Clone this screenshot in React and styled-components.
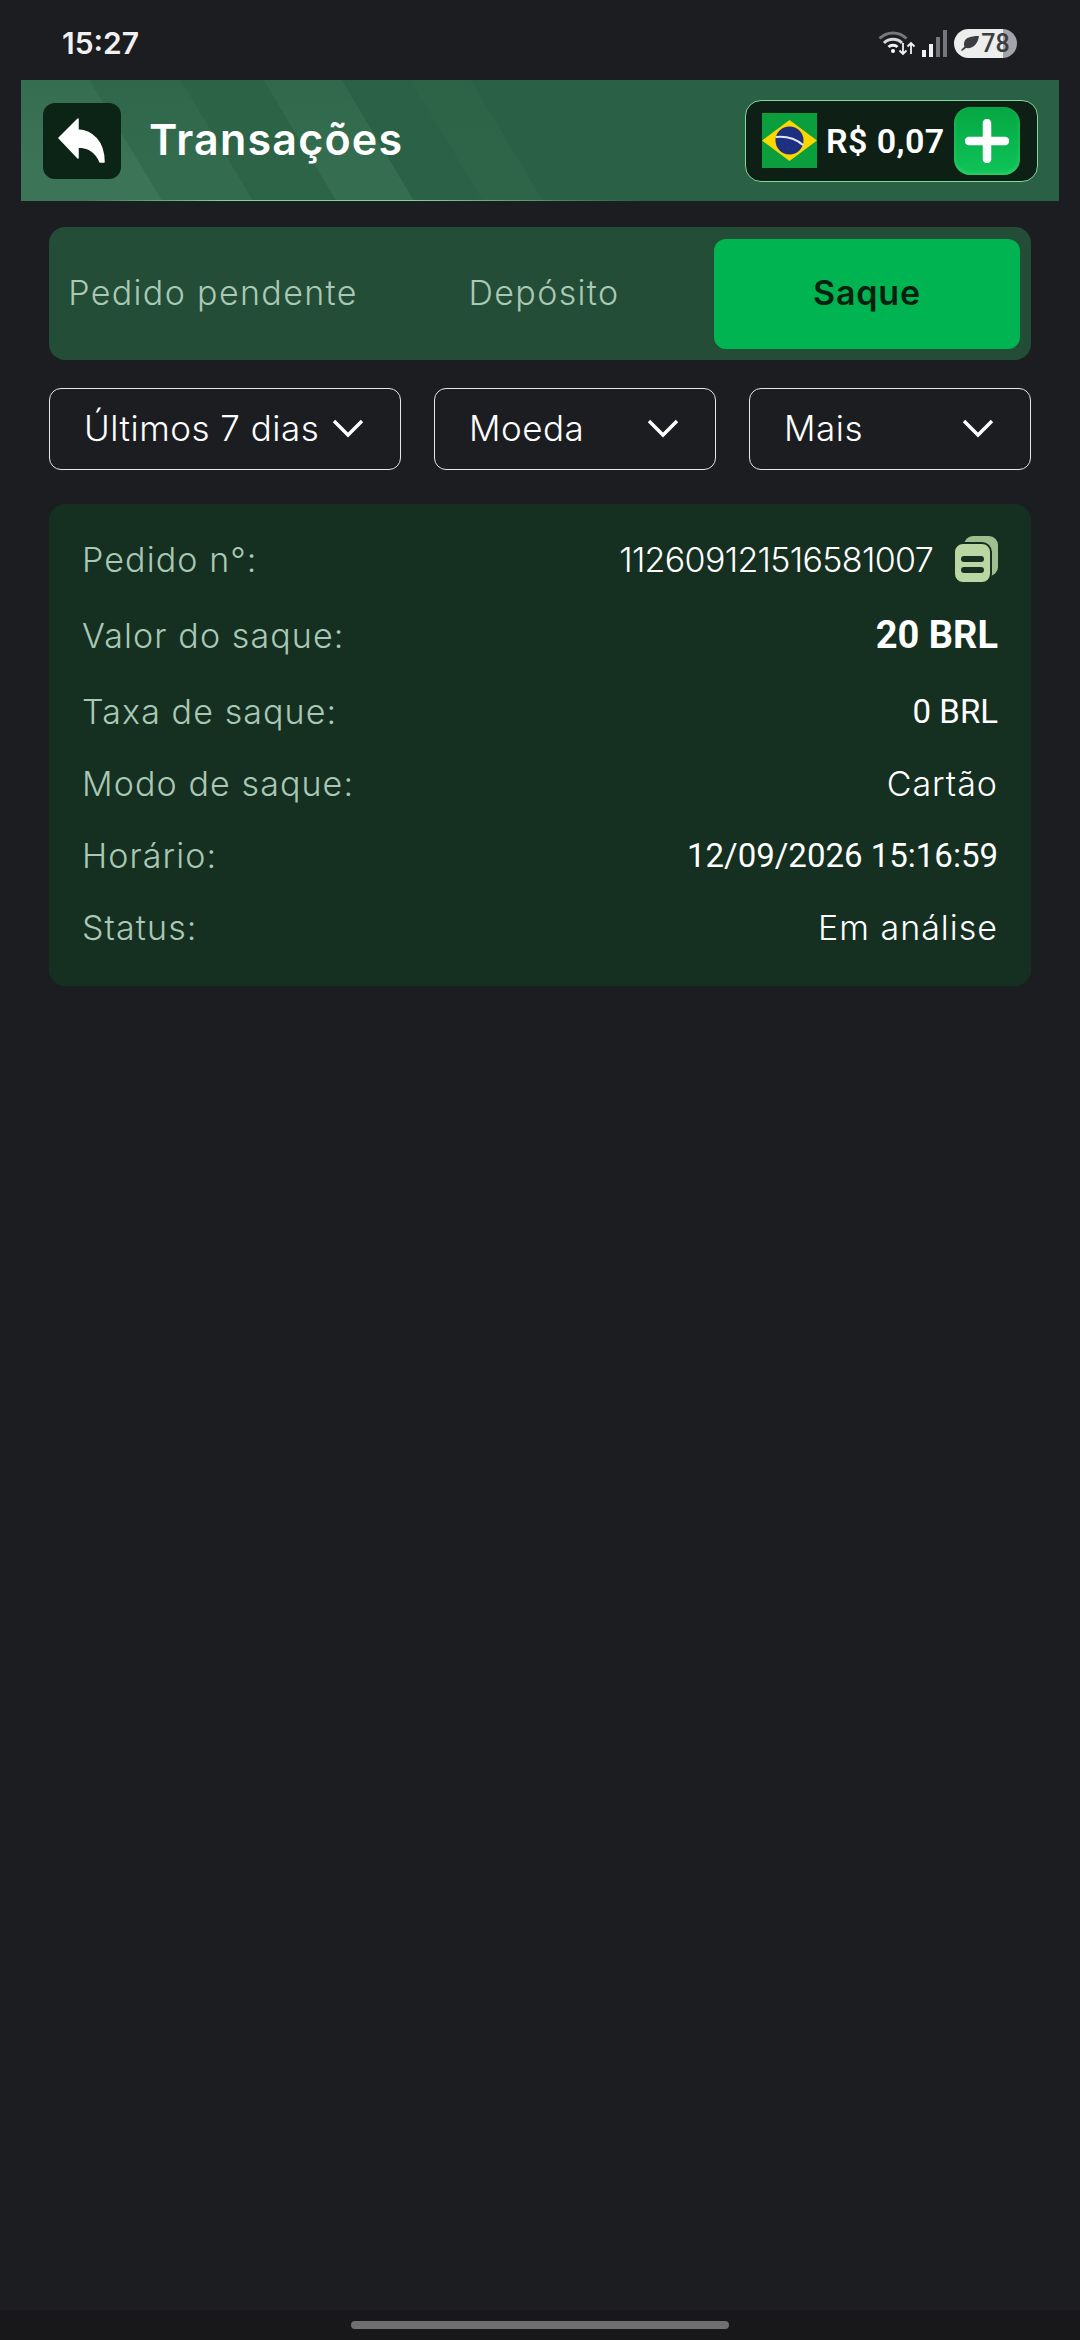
import React from "react";
import styled, { createGlobalStyle } from "styled-components";

const GlobalStyle = createGlobalStyle`
  html, body { margin: 0; padding: 0; background: #1c1d21; }
  * { box-sizing: border-box; }
`;

const sans = `Inter, "Open Sans", sans-serif`;
const num = `Roboto, "Liberation Sans", sans-serif`;

const Page = styled.div`
  width: 1080px;
  height: 2340px;
  background: #1c1d21;
  display: flex;
  flex-direction: column;
  overflow: hidden;
`;

const StatusBar = styled.div`
  height: 80px;
  padding: 6px 63px 0 62px;
  display: flex;
  align-items: center;
  justify-content: space-between;
`;

const Clock = styled.span`
  font: 600 30px ${sans};
  color: #f1f1f3;
`;

const StatusIcons = styled.div`
  display: flex;
  align-items: center;
  gap: 6px;
`;

const Battery = styled.div`
  width: 63px;
  height: 29px;
  border-radius: 15px;
  background: linear-gradient(90deg, #eceded 0 78%, #a4a4a8 78%);
  display: flex;
  align-items: center;
  justify-content: center;
  gap: 1px;
  font: 500 25px ${num};
  color: #3b3c40;
`;

const Header = styled.header`
  height: 121px;
  margin: 0 21px;
  padding: 0 22px;
  display: flex;
  align-items: center;
  justify-content: space-between;
  position: relative;
  background:
    linear-gradient(180deg, rgba(42, 96, 69, 0.35), rgba(42, 96, 69, 0) 70%),
    linear-gradient(59deg, #3b7456 0 12.7%, #336b4e 12.7% 20.9%, #2d6448 20.9% 28.4%, #356d50 28.4% 35.4%, #2b6146 35.4% 41.6%, #2e6448 41.6% 47%, #2a6045 47%);
  &::after {
    content: "";
    position: absolute;
    left: 60px;
    right: 420px;
    bottom: 0;
    height: 1px;
    background: linear-gradient(90deg, transparent, #7fd49a 25%, #7fd49a 60%, transparent);
  }
`;

const TitleGroup = styled.div`
  display: flex;
  align-items: center;
  gap: 28px;
`;

const BackButton = styled.button`
  width: 78px;
  height: 76px;
  border: 0;
  padding: 0;
  border-radius: 12px;
  background: #0b2415;
  display: flex;
  align-items: center;
  justify-content: center;
`;

const Title = styled.h1`
  margin: 0 0 3px;
  font: 600 43px ${sans};
  letter-spacing: 1.2px;
  color: #fff;
`;

const Balance = styled.div`
  width: 293px;
  height: 82px;
  border: 1.5px solid #7ddb99;
  border-radius: 16px;
  background: #0e2016;
  display: flex;
  align-items: center;
  padding: 0 17px 0 16px;
  margin-right: -1px;
`;

const BalanceText = styled.span`
  margin-left: 9px;
  flex: 1;
  font: 600 34px ${num};
  letter-spacing: 0.4px;
  color: #fff;
`;

const PlusButton = styled.button`
  width: 66px;
  height: 68px;
  padding: 0;
  border: 0;
  border-radius: 16px;
  background: linear-gradient(180deg, #05a743, #0fc458);
  box-shadow: inset 0 -2px 4px rgba(120, 240, 160, 0.3);
  display: flex;
  align-items: center;
  justify-content: center;
`;

const Content = styled.main`
  padding: 26px 49px 0;
  display: flex;
  flex-direction: column;
`;

const Tabs = styled.div`
  height: 133px;
  padding: 12px 11px 11px 3px;
  border-radius: 16px;
  background: #234d36;
  display: grid;
  grid-template-columns: 322px 340px 1fr;
`;

const Tab = styled.div`
  display: flex;
  align-items: center;
  justify-content: center;
  padding-bottom: 3px;
  border-radius: 12px;
  font: ${(p) => (p.$active ? 600 : 300)} 34px ${sans};
  letter-spacing: ${(p) => (p.$active ? "0.8px" : "1.35px")};
  color: ${(p) => (p.$active ? "#04200f" : "#a9c8b5")};
  background: ${(p) => (p.$active ? "#00b551" : "transparent")};
`;

const Filters = styled.div`
  margin-top: 28px;
  display: grid;
  grid-template-columns: 352px 282px 282px;
  justify-content: space-between;
`;

const Filter = styled.div`
  height: 82px;
  border: 1.5px solid #e6e6e8;
  border-radius: 12px;
  padding: 0 36px 3px 34px;
  display: flex;
  align-items: center;
  justify-content: space-between;
  font: 300 35px ${sans};
  letter-spacing: 0.5px;
  color: #fff;
`;

const Card = styled.section`
  margin-top: 34px;
  height: 482px;
  padding: 19px 33px 0 33px;
  border-radius: 16px;
  background: #153021;
`;

const Row = styled.div`
  height: 72px;
  margin-bottom: ${(p) => (p.$tall ? "4px" : "0")};
  display: flex;
  align-items: center;
  justify-content: space-between;
`;

const Label = styled.span`
  font: 300 34px ${sans};
  letter-spacing: 1.1px;
  color: #a9c8b5;
`;

const Value = styled.span`
  display: flex;
  align-items: center;
  gap: 22px;
  font: 300 34px ${sans};
  letter-spacing: 1px;
  color: #fff;
`;

const NumberValue = styled.span`
  font: ${(p) => (p.$bold ? "700 38px" : "400 33px")} ${num};
  color: #fff;
`;

const OrderId = styled.span`
  font: 300 34px ${sans};
  letter-spacing: -0.67px;
  color: #fff;
`;

const HomeArea = styled.div`
  margin-top: auto;
  height: 30px;
  background: #18181b;
  display: flex;
  justify-content: center;
  padding-top: 11px;
`;

const HomeBar = styled.div`
  width: 378px;
  height: 8px;
  border-radius: 4px;
  background: #6f6f72;
`;

const Chevron = () => (
  <svg width="32" height="20" viewBox="0 0 32 20" fill="none">
    <path d="M2 3l14 14L30 3" stroke="#fff" strokeWidth="3.4" />
  </svg>
);

const ReplyIcon = () => (
  <svg width="48" height="45" viewBox="-1 -1 48 45">
    <path
      d="M0 19 19 0V11C33 12 45 22 45 43H41C37 33 30 28 19 28V39z"
      fill="#fff"
      stroke="#fff"
      strokeWidth="1.5"
      strokeLinejoin="round"
    />
  </svg>
);

const PlusIcon = () => (
  <svg width="44" height="44" viewBox="0 0 44 44">
    <path d="M22 4v36M4 22h36" stroke="#fff" strokeWidth="8.5" strokeLinecap="round" />
  </svg>
);

const Flag = () => (
  <svg width="55" height="55" viewBox="0 0 55 55">
    <rect width="55" height="55" fill="#0a9e3d" />
    <path d="M27.5 7 55 27.5 27.5 48 0 27.5z" fill="#fdd600" />
    <circle cx="27.5" cy="27.5" r="14" fill="#1c2f80" />
    <path d="M14 24c10-1 20 2 27 8" stroke="#dfe6ef" strokeWidth="2" fill="none" />
    <path d="M20 31h.1M26 35h.1M32 36h.1M24 30h.1M34 33h.1" stroke="#cfd8ea" strokeWidth="1.5" />
  </svg>
);

const CopyIcon = () => (
  <svg width="43" height="46" viewBox="0 0 43 46">
    <rect x="9" y="0" width="34" height="40" rx="9" fill="#9fbf90" />
    <rect x="-1" y="7" width="37" height="40" rx="9" fill="#bad6a2" stroke="#153021" strokeWidth="2" />
    <rect x="6" y="20" width="23" height="6" rx="3" fill="#153021" />
    <rect x="6" y="31" width="23" height="6" rx="3" fill="#153021" />
  </svg>
);

const WifiIcon = () => (
  <svg width="38" height="26" viewBox="0 0 38 26" fill="none">
    <path d="M1.5 8.5C9 1 21 1 28.5 8.5" stroke="#77777b" strokeWidth="3" />
    <path d="M6 13c5-5 13-5 18 0" stroke="#d8d8da" strokeWidth="3" />
    <path d="M10.5 17c2.5-2.5 6.5-2.5 9 0" stroke="#f2f2f2" strokeWidth="3" />
    <circle cx="15" cy="21" r="2" fill="#fff" />
    <path d="M25 13v11M21.5 20.5 25 24l3.5-3.5M33 24V13M29.5 16.5 33 13l3.5 3.5" stroke="#f2f2f2" strokeWidth="1.8" />
  </svg>
);

const SignalIcon = () => (
  <svg width="26" height="27" viewBox="0 0 26 27">
    <rect x="0" y="20" width="4" height="7" fill="#f2f2f2" />
    <rect x="7" y="14" width="4" height="13" fill="#f2f2f2" />
    <rect x="14" y="7" width="4" height="20" fill="#77777b" />
    <rect x="21" y="0" width="4" height="27" fill="#77777b" />
  </svg>
);

const LeafIcon = () => (
  <svg width="19" height="15" viewBox="0 0 19 15">
    <path d="M18 0C9 0 3 2 3 8c0 1 0 2 .5 2.5L0 14l1 1 4-3c7 1 12-4 13-12z" fill="#3b3c40" />
  </svg>
);

const rows = [
  { label: "Valor do saque:", value: <NumberValue $bold>20 BRL</NumberValue>, tall: true },
  { label: "Taxa de saque:", value: <NumberValue>0 BRL</NumberValue> },
  { label: "Modo de saque:", value: <Value>Cartão</Value> },
  { label: "Horário:", value: <NumberValue>12/09/2026 15:16:59</NumberValue> },
  { label: "Status:", value: <Value>Em análise</Value> },
];

const App = () => {
  return (
    <Page>
      <GlobalStyle />
      <StatusBar>
        <Clock>15:27</Clock>
        <StatusIcons>
          <WifiIcon />
          <SignalIcon />
          <Battery>
            <LeafIcon />
            78
          </Battery>
        </StatusIcons>
      </StatusBar>
      <Header>
        <TitleGroup>
          <BackButton>
            <ReplyIcon />
          </BackButton>
          <Title>Transações</Title>
        </TitleGroup>
        <Balance>
          <Flag />
          <BalanceText>R$ 0,07</BalanceText>
          <PlusButton>
            <PlusIcon />
          </PlusButton>
        </Balance>
      </Header>
      <Content>
        <Tabs>
          <Tab>Pedido pendente</Tab>
          <Tab>Depósito</Tab>
          <Tab $active>Saque</Tab>
        </Tabs>
        <Filters>
          <Filter>
            Últimos 7 dias
            <Chevron />
          </Filter>
          <Filter>
            Moeda
            <Chevron />
          </Filter>
          <Filter>
            Mais
            <Chevron />
          </Filter>
        </Filters>
        <Card>
          <Row $tall>
            <Label>Pedido n°:</Label>
            <Value>
              <OrderId>112609121516581007</OrderId>
              <CopyIcon />
            </Value>
          </Row>
          {rows.map((row) => (
            <Row key={row.label} $tall={row.tall}>
              <Label>{row.label}</Label>
              {row.value}
            </Row>
          ))}
        </Card>
      </Content>
      <HomeArea>
        <HomeBar />
      </HomeArea>
    </Page>
  );
};

export default App;
